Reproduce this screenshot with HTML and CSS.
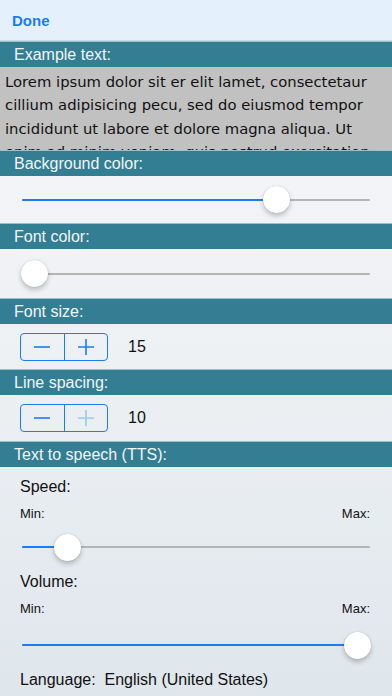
FILE: index.html
```
<!DOCTYPE html>
<html>
<head>
<meta charset="utf-8">
<link rel="stylesheet" href="styles.css">
</head>
<body>
<div class="topbar"><span class="done">Done</span></div>
<div class="hdr">Example text:</div>
<div class="example"><div class="extext">Lorem ipsum dolor sit er elit lamet, consectetaur cillium adipisicing pecu, sed do eiusmod tempor incididunt ut labore et dolore magna aliqua. Ut enim ad minim veniam, quis nostrud exercitation ullamco laboris nisi ut aliquip ex ea commodo consequat.</div></div>
<div class="hdr">Background color:</div>
<div class="sliderrow">
  <div class="slider"><div class="fill" style="width:73%"></div><div class="thumb" style="left:73%"></div></div>
</div>
<div class="hdr">Font color:</div>
<div class="sliderrow sr2">
  <div class="slider"><div class="fill" style="width:0%"></div><div class="thumb" style="left:3.7%"></div></div>
</div>
<div class="hdr">Font size:</div>
<div class="steprow">
  <div class="stepper"><span class="seg"><svg width="20" height="20" viewBox="0 0 20 20"><path d="M2 10H18" stroke="#1a7cf8" stroke-width="1.6"/></svg></span><span class="seg sepl"><svg width="20" height="20" viewBox="0 0 20 20"><path d="M2 10H18M10 2V18" stroke="#1a7cf8" stroke-width="1.6"/></svg></span></div>
  <span class="val">15</span>
</div>
<div class="hdr">Line spacing:</div>
<div class="steprow sr3">
  <div class="stepper"><span class="seg"><svg width="20" height="20" viewBox="0 0 20 20"><path d="M2 10H18" stroke="#1a7cf8" stroke-width="1.6"/></svg></span><span class="seg sepl"><svg width="20" height="20" viewBox="0 0 20 20"><path d="M2 10H18M10 2V18" stroke="#9ac6fb" stroke-width="1.6"/></svg></span></div>
  <span class="val">10</span>
</div>
<div class="hdr">Text to speech (TTS):</div>
<div class="tts">
  <div class="lbl">Speed:</div>
  <div class="minmax"><span>Min:</span><span>Max:</span></div>
  <div class="slider tslider"><div class="fill" style="width:13%"></div><div class="thumb" style="left:13%"></div></div>
  <div class="lbl">Volume:</div>
  <div class="minmax"><span>Min:</span><span>Max:</span></div>
  <div class="slider tslider t2"><div class="fill" style="width:96%"></div><div class="thumb" style="left:96.3%"></div></div>
  <div class="lang">Language:&nbsp; English (United States)</div>
</div>
</body>
</html>
```
FILE: styles.css
```
html, body { margin: 0; padding: 0; }
body {
  width: 392px;
  height: 696px;
  overflow: hidden;
  font-family: "Liberation Sans", Arial, sans-serif;
  background: linear-gradient(#f6f7f9 0%, #eef1f4 50%, #dfe6ec 100%);
  color: #111;
}
.topbar {
  height: 41px;
  background: #e4f1fc;
  display: flex;
  align-items: center;
  padding-left: 12px;
  padding-top: 1px;
  border-bottom: 1px solid #c8dbe6;
  box-sizing: border-box;
}
.done {
  color: #1a7cf8;
  font-weight: bold;
  font-size: 15px;
}
.hdr {
  height: 26px;
  box-sizing: border-box;
  background: #337e93;
  color: #f1f6f8;
  font-size: 16px;
  padding-left: 14px;
  line-height: 26px;
  border-top: 1px solid #9fc0cb;
}
.example {
  height: 83px;
  overflow: hidden;
  background: #c1c1c1;
  padding: 3px 5px 0 5px;
  box-sizing: border-box;
}
.extext {
  font-family: "DejaVu Sans", Verdana, sans-serif;
  font-size: 14.8px;
  line-height: 23.3px;
  color: #111;
}
.sliderrow {
  height: 47px;
  display: flex;
  align-items: center;
  padding: 0 22px;
}
.sr2 { height: 49px; }
.slider {
  position: relative;
  flex: 1;
  height: 2px;
  background: #b5b5b5;
  border-radius: 1px;
}
.fill {
  position: absolute;
  left: 0; top: 0; bottom: 0;
  background: #1a7cf8;
  border-radius: 1px;
}
.thumb {
  position: absolute;
  top: 50%;
  width: 27px;
  height: 27px;
  margin-left: -13.5px;
  margin-top: -13.5px;
  border-radius: 50%;
  background: #fff;
  box-shadow: 0 3px 5px rgba(0,0,0,0.22), 0 0 1px rgba(0,0,0,0.25);
}
.steprow {
  height: 45px;
  display: flex;
  align-items: center;
  padding-left: 20px;
  gap: 20px;
}
.sr3 { height: 46px; }
.stepper {
  display: flex;
  width: 88px;
  height: 28px;
  border: 1px solid #1a7cf8;
  border-radius: 4px;
  box-sizing: border-box;
}
.seg {
  flex: 1;
  display: flex;
  align-items: center;
  justify-content: center;
}
.sepl { border-left: 1px solid #1a7cf8; }
.val { font-size: 16px; color: #111; }
.tts {
  padding: 10px 22px 0 20px;
}
.lbl { font-size: 16px; height: 20px; line-height: 20px; }
.minmax {
  display: flex;
  justify-content: space-between;
  font-size: 13px;
  margin-top: 9px;
  height: 16px;
  line-height: 16px;
}
.tslider { margin: 24px 0 24px 2px; }
.t2 { margin-top: 27px; }
.lang { font-size: 16px; margin-top: 0px; line-height: 20px; }
```
